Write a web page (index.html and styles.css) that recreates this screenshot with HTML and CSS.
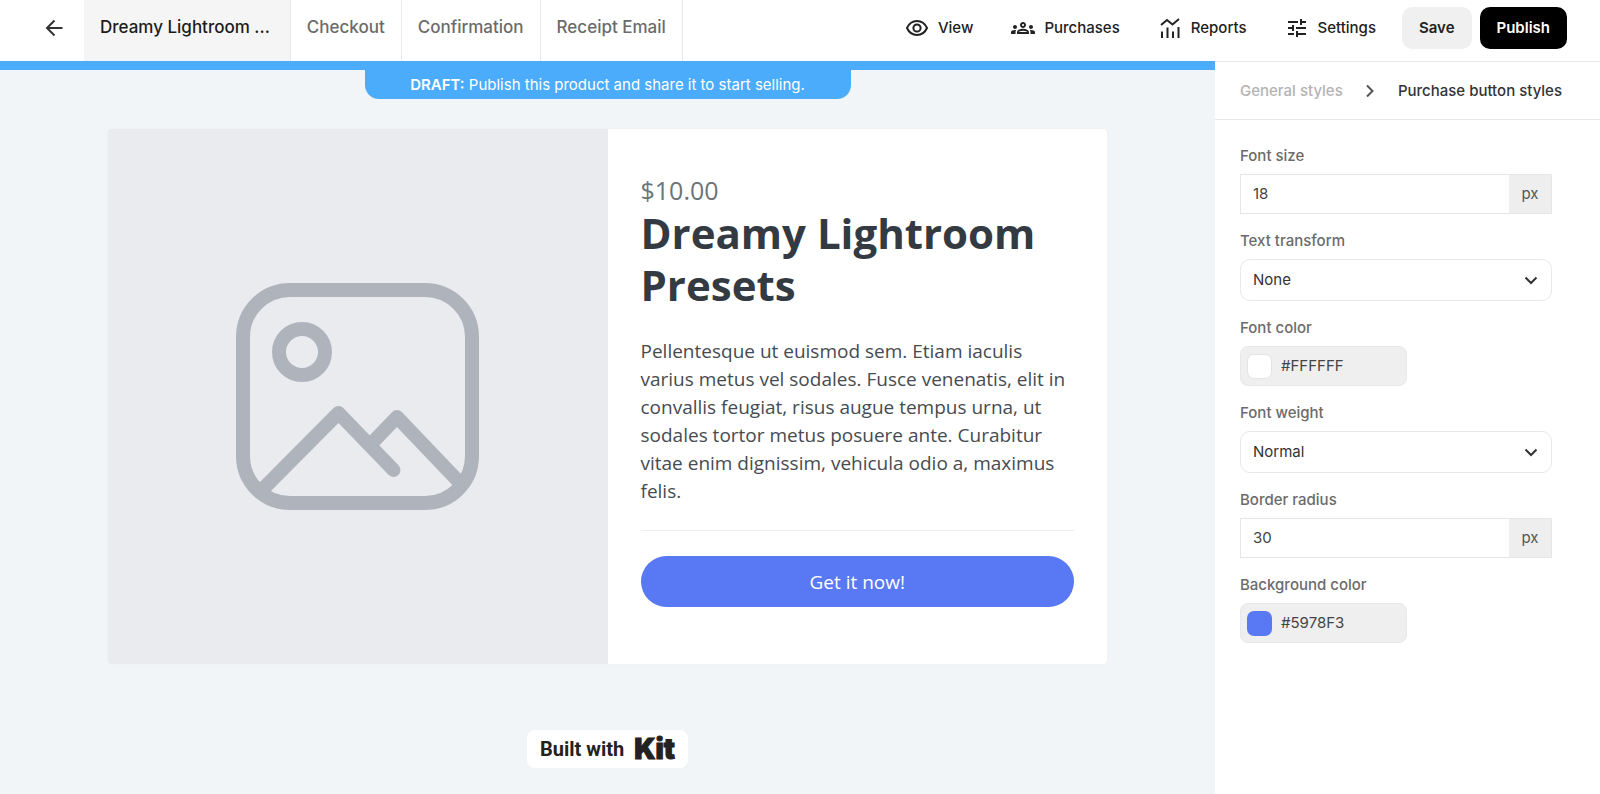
FILE: index.html
```html
<!DOCTYPE html>
<html lang="en">
<head>
<meta charset="utf-8">
<meta name="viewport" content="width=device-width, initial-scale=1">
<title>Dreamy Lightroom Presets</title>
<link rel="stylesheet" href="styles.css">
</head>
<body>
<header class="topbar">
  <a class="back" href="#" aria-label="Back">
    <svg width="24" height="24" viewBox="0 0 24 24" fill="none" stroke="currentColor" stroke-width="2"><path d="M20.500 12H5.500M12.500 4.500 5 12l7.500 7.500"/></svg>
  </a>
  <nav class="tabs">
    <a class="tab tab-active" href="#">Dreamy Lightroom ...</a>
    <a class="tab" href="#">Checkout</a>
    <a class="tab" href="#">Confirmation</a>
    <a class="tab" href="#">Receipt Email</a>
  </nav>
  <div class="actions">
    <a class="action" href="#">
      <svg width="24" height="24" viewBox="0 0 24 24" fill="none" stroke="currentColor" stroke-width="2"><path d="M2 12C4 7.500 7.600 5 12 5s8 2.500 10 7c-2 4.500-5.600 7-10 7s-8-2.500-10-7z"/><circle cx="12" cy="12" r="3.600"/></svg>
      View
    </a>
    <a class="action" href="#">
      <svg width="24" height="24" viewBox="0 0 24 24" fill="currentColor"><path d="M4 13c1.100 0 2-.9 2-2s-.9-2-2-2-2 .9-2 2 .9 2 2 2zm1.130 1.100c-.37-.06-.74-.1-1.130-.1-.99 0-1.930.21-2.780.58C.48 14.900 0 15.620 0 16.430V18h4.500v-1.610c0-.83.23-1.610.63-2.290zM20 13c1.100 0 2-.9 2-2s-.9-2-2-2-2 .9-2 2 .9 2 2 2zm4 3.430c0-.81-.48-1.530-1.220-1.850-.85-.37-1.790-.58-2.780-.58-.39 0-.76.04-1.130.1.4.68.63 1.460.63 2.290V18H24v-1.570zM16.240 13.650c-1.170-.52-2.610-.9-4.240-.9s-3.070.39-4.240.9C6.680 14.130 6 15.210 6 16.390V18h12v-1.610c0-1.180-.68-2.260-1.760-2.740zM8.070 16c.09-.23.13-.39.91-.69.97-.38 1.990-.56 3.020-.56s2.050.18 3.020.56c.77.3.81.46.91.69H8.070zM12 8c.55 0 1 .45 1 1s-.45 1-1 1-1-.45-1-1 .45-1 1-1m0-2c-1.660 0-3 1.340-3 3s1.340 3 3 3 3-1.340 3-3-1.340-3-3-3z"/></svg>
      Purchases
    </a>
    <a class="action" href="#">
      <svg width="24" height="24" viewBox="0 0 24 24" fill="none" stroke="currentColor" stroke-width="2"><path d="M3 9 9 4l5.500 4.500L21 3M4 15.500V22M9.500 11.500V22M15 15.500V22M20.500 11V22"/></svg>
      Reports
    </a>
    <a class="action" href="#">
      <svg width="24" height="24" viewBox="0 0 24 24" fill="currentColor"><path d="M3 17v2h6v-2H3zM3 5v2h10V5H3zm10 16v-2h8v-2h-8v-2h-2v6h2zM7 9v2H3v2h4v2h2V9H7zm14 4v-2H11v2h10zm-6-4h2V7h4V5h-4V3h-2v6z"/></svg>
      Settings
    </a>
    <div class="buttons">
      <button class="btn btn-save" type="button">Save</button>
      <button class="btn btn-publish" type="button">Publish</button>
    </div>
  </div>
</header>
<div class="workspace">
  <main class="preview">
    <p class="draft"><strong>DRAFT:</strong> Publish this product and share it to start selling.</p>
    <article class="card">
      <div class="cover">
        <svg width="246" height="230" viewBox="0 0 246 230" fill="none" stroke="#afb3bb" stroke-width="14" stroke-linejoin="round" stroke-linecap="round"><rect x="8" y="8" width="229" height="213" rx="47"/><circle cx="67" cy="70" r="23"/><path d="M25 210 103.500 131l55 57M137 161l25-26 63 66"/></svg>
      </div>
      <div class="details">
        <p class="price">$10.00</p>
        <h1 class="title">Dreamy Lightroom Presets</h1>
        <p class="description">Pellentesque ut euismod sem. Etiam iaculis varius metus vel sodales. Fusce venenatis, elit in convallis feugiat, risus augue tempus urna, ut sodales tortor metus posuere ante. Curabitur vitae enim dignissim, vehicula odio a, maximus felis.</p>
        <hr class="rule">
        <button class="buy" type="button">Get it now!</button>
      </div>
    </article>
    <a class="badge" href="#">Built with <span class="badge-logo">Kit</span></a>
  </main>
  <aside class="sidebar">
    <nav class="crumbs">
      <a class="crumb" href="#">General styles</a>
      <svg width="16" height="16" viewBox="0 0 16 16" fill="none" stroke="#555" stroke-width="2"><path d="m5 2.500 5.500 5.500L5 13.500"/></svg>
      <span class="crumb-current">Purchase button styles</span>
    </nav>
    <form class="fields">
      <div class="field">
        <label class="label" for="size">Font size</label>
        <div class="unit-box"><input class="number" id="size" type="text" value="18"><span class="unit">px</span></div>
      </div>
      <div class="field">
        <label class="label" for="transform">Text transform</label>
        <div class="select-box">
          <select class="select" id="transform"><option>None</option></select>
          <svg class="chevron" width="16" height="16" viewBox="0 0 16 16" fill="none" stroke="#333" stroke-width="2"><path d="m2.500 5.500 5.500 5.500 5.500-5.500"/></svg>
        </div>
      </div>
      <div class="field">
        <label class="label" for="color">Font color</label>
        <div class="color-box"><span class="swatch swatch-white"></span><input class="hex" id="color" type="text" value="#FFFFFF"></div>
      </div>
      <div class="field">
        <label class="label" for="weight">Font weight</label>
        <div class="select-box">
          <select class="select" id="weight"><option>Normal</option></select>
          <svg class="chevron" width="16" height="16" viewBox="0 0 16 16" fill="none" stroke="#333" stroke-width="2"><path d="m2.500 5.500 5.500 5.500 5.500-5.500"/></svg>
        </div>
      </div>
      <div class="field">
        <label class="label" for="radius">Border radius</label>
        <div class="unit-box"><input class="number" id="radius" type="text" value="30"><span class="unit">px</span></div>
      </div>
      <div class="field">
        <label class="label" for="background">Background color</label>
        <div class="color-box"><span class="swatch swatch-blue"></span><input class="hex" id="background" type="text" value="#5978F3"></div>
      </div>
    </form>
  </aside>
</div>
</body>
</html>
```
FILE: styles.css
```css
* { box-sizing: border-box; }
body {
  margin: 0;
  min-height: 100vh;
  display: flex;
  flex-direction: column;
  font-family: Inter, "Liberation Sans", sans-serif;
  font-size: 15px;
  line-height: 20px;
  color: #222;
  background: #fff;
}
p, h1 { margin: 0; }
a { color: inherit; text-decoration: none; }
button, input, select { font: inherit; }
svg { display: block; flex: none; }

.topbar { display: flex; height: 61px; }
.back {
  display: flex;
  width: 84px;
  padding: 16px 0 0 42px;
  color: #333;
}
.tabs { display: flex; font-size: 17px; font-weight: 500; }
.tab {
  padding: 17px 16px 0;
  border-right: 1px solid #e8e8e8;
  color: #6b6b6b;
  white-space: nowrap;
}
.tab-active { background: #f5f5f5; color: #1c1c1c; padding-right: 20px; }
.actions {
  display: flex;
  align-items: center;
  gap: 38px;
  margin-left: auto;
  padding: 0 33px 6px 0;
  font-weight: 500;
}
.action { display: flex; align-items: center; gap: 9px; }
.buttons { display: flex; gap: 8px; margin-left: -12px; }
.btn {
  height: 42px;
  padding: 0 17px;
  border: 0;
  border-radius: 10px;
  font-weight: 600;
  cursor: pointer;
}
.btn-save { background: #f0f0f0; color: #222; }
.btn-publish { background: #000; color: #fff; }

.workspace { display: flex; flex: 1; }
.preview {
  flex: 1;
  display: flex;
  flex-direction: column;
  align-items: center;
  border-top: 9px solid #4aacfa;
  background: #f1f5f8;
  padding-bottom: 26px;
}
.draft {
  width: 40%;
  min-width: 420px;
  height: 29px;
  padding-top: 5px;
  border-radius: 0 0 14px 14px;
  background: #4aacfa;
  color: #fff;
  text-align: center;
}
.draft strong { font-weight: 600; }
.card {
  display: grid;
  grid-template-columns: 1fr 1fr;
  width: 82.4%;
  margin-top: 29px;
  border: 1px solid #f1f2f6;
  border-radius: 5px;
  background: #fff;
  overflow: hidden;
  font-family: "Open Sans", "Noto Sans", sans-serif;
}
.cover {
  display: flex;
  align-items: center;
  justify-content: center;
  background: #e9ebef;
}
.details { padding: 44px 33px 57px; }
.price { font-size: 25px; line-height: 34px; color: #6c7479; }
.title { font-size: 42px; line-height: 52px; font-weight: 700; color: #343a42; }
.description { margin-top: 26px; font-size: 19px; line-height: 28px; color: #464b51; }
.rule { margin: 25px 0; border: 0; border-top: 1px solid #eeeff2; }
.buy {
  display: block;
  width: 100%;
  height: 51px;
  border: 0;
  border-radius: 30px;
  background: #5978f3;
  color: #fff;
  font-size: 19px;
  cursor: pointer;
}
.badge {
  display: flex;
  align-items: center;
  gap: 10px;
  height: 38px;
  margin-top: auto;
  padding: 0 13px;
  border-radius: 8px;
  background: #fff;
  font-family: Roboto, sans-serif;
  font-size: 20px;
  font-weight: 700;
}
.badge-logo {
  font-family: Inter, sans-serif;
  font-size: 28px;
  font-weight: 900;
  -webkit-text-stroke: 1px #222;
}

.sidebar { width: 385px; border-top: 1px solid #e8e8e8; }
.crumbs {
  display: flex;
  align-items: center;
  justify-content: space-between;
  height: 58px;
  padding: 0 38px 0 25px;
  border-bottom: 1px solid #e8e8e8;
  font-weight: 500;
}
.crumb { color: #b3b3b3; }
.crumb-current { color: #333; }
.fields {
  display: flex;
  flex-direction: column;
  gap: 17px;
  padding: 26px 48px 26px 25px;
}
.field { display: flex; flex-direction: column; gap: 8px; }
.label { font-weight: 500; color: #6b6b6b; }
.unit-box { display: flex; height: 40px; border: 1px solid #e6e6e6; }
.number {
  flex: 1;
  min-width: 0;
  padding: 0 12px;
  border: 0;
  background: #fff;
  color: #444;
}
.unit {
  width: 42px;
  line-height: 38px;
  background: #eee;
  color: #555;
  text-align: center;
}
.select-box { position: relative; }
.select {
  display: block;
  width: 100%;
  height: 42px;
  padding: 0 12px;
  border: 1px solid #e8e8e8;
  border-radius: 10px;
  appearance: none;
  background: #fff;
  color: #333;
}
.chevron { position: absolute; top: 13px; right: 13px; pointer-events: none; }
.color-box {
  display: flex;
  align-items: center;
  gap: 9px;
  width: 167px;
  height: 40px;
  padding: 0 6px;
  border: 1px solid #e8e8e8;
  border-radius: 8px;
  background: #efefef;
}
.swatch { flex: none; width: 25px; height: 25px; border-radius: 7px; }
.swatch-white { background: #fff; border: 1px solid #e4e4e4; }
.swatch-blue { background: #5978f3; }
.hex { min-width: 0; width: 100%; padding: 0; border: 0; background: none; color: #444; }
```
